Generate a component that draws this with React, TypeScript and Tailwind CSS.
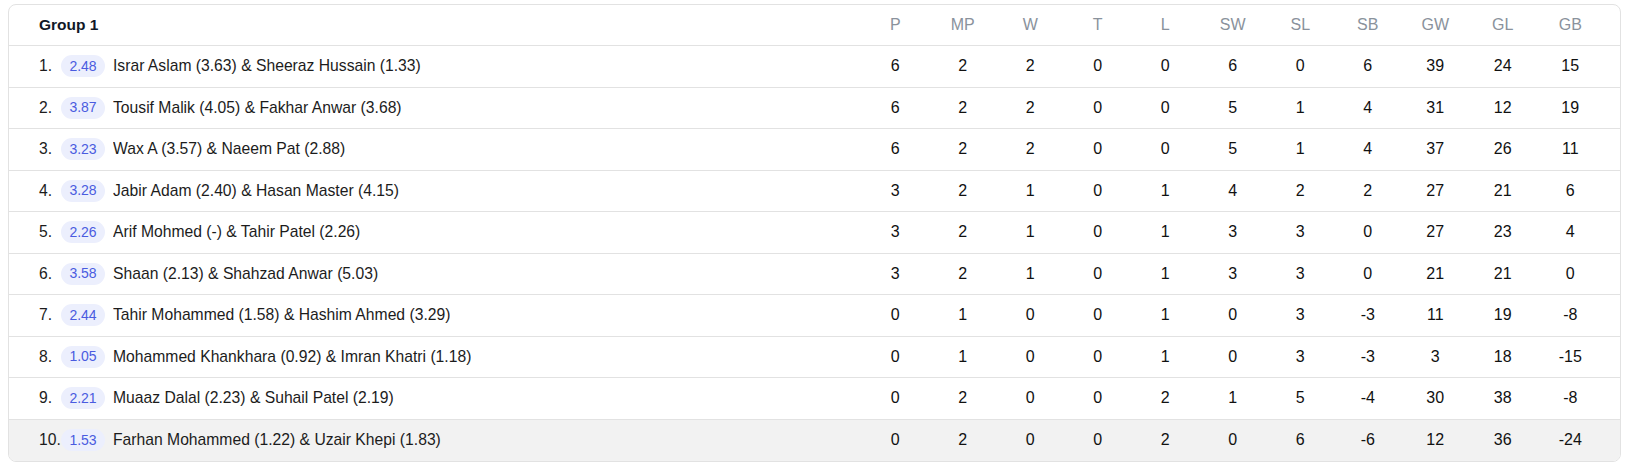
import React from 'react'

type Row = {
  rating: string
  pair: string
  stats: number[]
}

const columns = ['P', 'MP', 'W', 'T', 'L', 'SW', 'SL', 'SB', 'GW', 'GL', 'GB']

const rows: Row[] = [
  { rating: '2.48', pair: 'Israr Aslam (3.63) & Sheeraz Hussain (1.33)', stats: [6, 2, 2, 0, 0, 6, 0, 6, 39, 24, 15] },
  { rating: '3.87', pair: 'Tousif Malik (4.05) & Fakhar Anwar (3.68)', stats: [6, 2, 2, 0, 0, 5, 1, 4, 31, 12, 19] },
  { rating: '3.23', pair: 'Wax A (3.57) & Naeem Pat (2.88)', stats: [6, 2, 2, 0, 0, 5, 1, 4, 37, 26, 11] },
  { rating: '3.28', pair: 'Jabir Adam (2.40) & Hasan Master (4.15)', stats: [3, 2, 1, 0, 1, 4, 2, 2, 27, 21, 6] },
  { rating: '2.26', pair: 'Arif Mohmed (-) & Tahir Patel (2.26)', stats: [3, 2, 1, 0, 1, 3, 3, 0, 27, 23, 4] },
  { rating: '3.58', pair: 'Shaan (2.13) & Shahzad Anwar (5.03)', stats: [3, 2, 1, 0, 1, 3, 3, 0, 21, 21, 0] },
  { rating: '2.44', pair: 'Tahir Mohammed (1.58) & Hashim Ahmed (3.29)', stats: [0, 1, 0, 0, 1, 0, 3, -3, 11, 19, -8] },
  { rating: '1.05', pair: 'Mohammed Khankhara (0.92) & Imran Khatri (1.18)', stats: [0, 1, 0, 0, 1, 0, 3, -3, 3, 18, -15] },
  { rating: '2.21', pair: 'Muaaz Dalal (2.23) & Suhail Patel (2.19)', stats: [0, 2, 0, 0, 2, 1, 5, -4, 30, 38, -8] },
  { rating: '1.53', pair: 'Farhan Mohammed (1.22) & Uzair Khepi (1.83)', stats: [0, 2, 0, 0, 2, 0, 6, -6, 12, 36, -24] },
]

const gridCols = 'grid grid-cols-[1fr_repeat(11,67.5px)] pr-4'

export default function App() {
  return (
    <div className="min-h-screen bg-white px-2 pt-1 font-['Liberation_Sans',Arial,sans-serif]">
      <div className="overflow-hidden rounded-lg border border-[#e2e2e2] bg-white">
        <div className={`${gridCols} h-[41px] items-center border-b border-[#e2e2e2]`}>
          <div className="pl-[30px] text-[15.5px] font-bold text-[#111827]">Group 1</div>
          {columns.map((c) => (
            <div key={c} className="text-center text-base text-[#8a929c]">
              {c}
            </div>
          ))}
        </div>

        {rows.map((row, i) => {
          const last = i === rows.length - 1
          return (
            <div
              key={row.pair}
              className={`${gridCols} h-[41.5px] items-center ${last ? 'bg-[#f2f2f2]' : 'border-b border-[#e2e2e2]'}`}
            >
              <div className="flex items-center pl-[30px] text-[15.7px] text-[#1c1c1c]">
                <span className="w-[22px] shrink-0">{i + 1}.</span>
                <span className="mr-2 flex h-[22px] w-[44px] shrink-0 items-center justify-center rounded-full bg-[#eceffd] text-[14px] text-[#4a5be0]">
                  {row.rating}
                </span>
                <span className="truncate">{row.pair}</span>
              </div>
              {row.stats.map((v, j) => (
                <div key={j} className="text-center text-base text-[#111]">
                  {v}
                </div>
              ))}
            </div>
          )
        })}
      </div>
    </div>
  )
}
